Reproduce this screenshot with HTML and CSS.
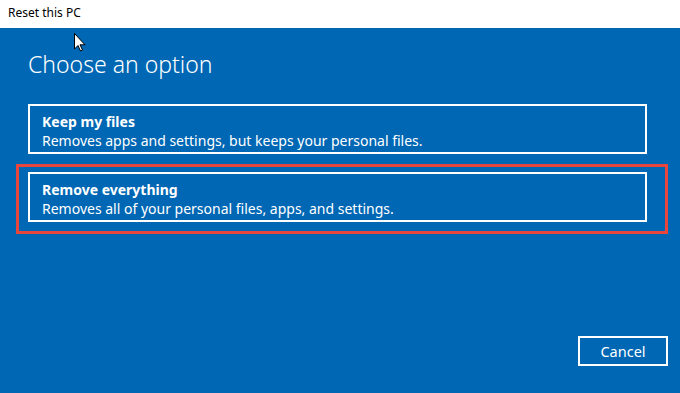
FILE: index.html
```html
<!DOCTYPE html>
<html>
<head>
<meta charset="utf-8">
<link rel="stylesheet" href="styles.css">
</head>
<body>
<div class="titlebar">Reset this PC</div>
<main class="main">
  <h1 class="heading">Choose an option</h1>
  <div class="options">
    <div class="option">
      <div class="option-title">Keep my files</div>
      <div class="option-desc">Removes apps and settings, but keeps your personal files.</div>
    </div>
    <div class="option-wrap">
      <div class="option">
        <div class="option-title">Remove everything</div>
        <div class="option-desc">Removes all of your personal files, apps, and settings.</div>
      </div>
      <div class="highlight"></div>
    </div>
  </div>
  <div class="footer">
    <button class="btn">Cancel</button>
  </div>
  <svg class="cursor" width="12" height="19" viewBox="0 0 12 19">
    <path d="M0.5 0.5 L0.5 16 L4 12.5 L6.5 18 L8.5 17 L6 11.8 L11 11.8 Z" fill="#fff" stroke="#000" stroke-width="1"/>
  </svg>
</main>
</body>
</html>
```
FILE: styles.css
```css
html, body {
  margin: 0;
  padding: 0;
}
body {
  width: 680px;
  height: 393px;
  overflow: hidden;
  font-family: "Noto Sans", "Open Sans", sans-serif;
  background: #0067b4;
}
.titlebar {
  height: 28px;
  box-sizing: border-box;
  background: #fff;
  color: #000;
  font-size: 12px;
  line-height: 16px;
  padding: 5px 0 0 8px;
}
.main {
  position: relative;
  height: 365px;
  box-sizing: border-box;
  background: #0067b4;
  color: #fff;
  padding: 20px 33px 0 28px;
  display: flex;
  flex-direction: column;
}
.heading {
  margin: 0;
  font-weight: 300;
  font-size: 23px;
  line-height: 32px;
}
.options {
  margin-top: 24px;
  display: flex;
  flex-direction: column;
  gap: 18px;
}
.option-wrap {
  position: relative;
}
.option {
  border: 2px solid #fff;
  height: 50px;
  box-sizing: border-box;
  padding: 6px 12px 0 12px;
}
.option-title {
  font-weight: 700;
  font-size: 14px;
  line-height: 19px;
}
.option-desc {
  font-size: 14px;
  line-height: 19px;
}
.highlight {
  position: absolute;
  left: -12px;
  top: -8px;
  right: -21px;
  bottom: -12px;
  border: 3px solid #e8463c;
}
.footer {
  margin-top: auto;
  display: flex;
  justify-content: flex-end;
  margin-right: -21px;
  padding-bottom: 27px;
}
.btn {
  width: 90px;
  height: 30px;
  background: transparent;
  border: 2px solid #fff;
  color: #fff;
  font-family: inherit;
  font-size: 14.5px;
  padding: 0;
}
.cursor {
  position: absolute;
  left: 74px;
  top: 5px;
}
```
